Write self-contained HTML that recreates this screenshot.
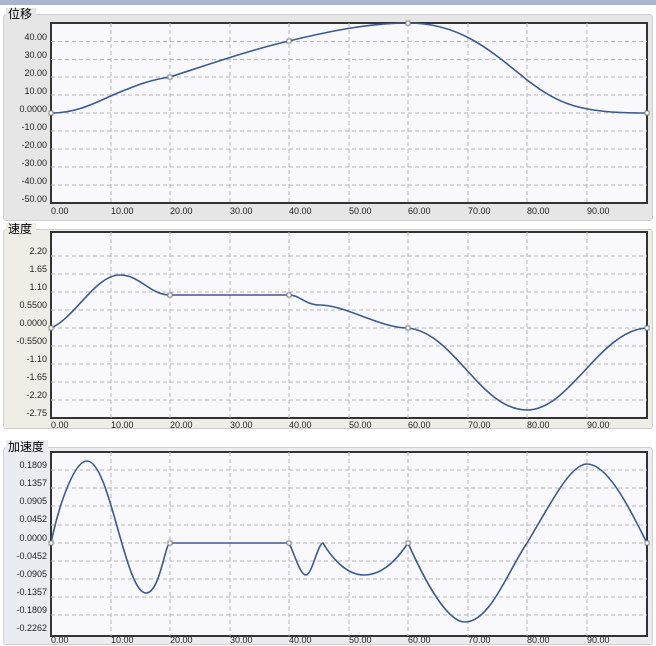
<!DOCTYPE html>
<html><head><meta charset="utf-8"><style>
body{margin:0;width:656px;height:646px;overflow:hidden;background:#fff}
svg{display:block}
text{font-family:"Liberation Sans","Noto Sans CJK SC",sans-serif;fill:#222}
.t{font-size:9px}
.h{font-size:12px;fill:#000}
.g{stroke:#b8b8b8;stroke-dasharray:4 3;stroke-width:1;fill:none}
.c{stroke:#3a5a90;stroke-width:1.6;fill:none}
.m{fill:#fff;stroke:#888;stroke-width:1}
</style></head><body>
<svg width="656" height="646" xmlns="http://www.w3.org/2000/svg">
<rect x="0" y="0" width="656" height="5" fill="#a9b4cf"/>
<!-- panel 1 -->
<rect x="3.5" y="14.5" width="649" height="206" rx="3" fill="#e6e6e6" stroke="#cfcfcf"/>
<rect x="6" y="8" width="30" height="13" fill="#e6e6e6"/>
<text class="h" x="8" y="18">位移</text>
<rect x="51" y="23" width="596" height="180" fill="#f9f9fd" stroke="#333" stroke-width="2"/>
<g class="g">
<path d="M111,23V203M170,23V203M230,23V203M289,23V203M349,23V203M408,23V203M468,23V203M527,23V203M587,23V203"/>
<path d="M51,41.5H647M51,59.5H647M51,77H647M51,95H647M51,113H647M51,131H647M51,149H647M51,167H647M51,185H647"/>
</g>
<g class="t" text-anchor="end">
<text x="47" y="40">40.00</text><text x="47" y="58">30.00</text><text x="47" y="76">20.00</text><text x="47" y="94">10.00</text><text x="47" y="112">0.0000</text><text x="47" y="130">-10.00</text><text x="47" y="148">-20.00</text><text x="47" y="166">-30.00</text><text x="47" y="184">-40.00</text><text x="47" y="202">-50.00</text>
</g>
<g class="t"><text x="51" y="214">0.00</text><text x="111" y="214">10.00</text><text x="170" y="214">20.00</text><text x="230" y="214">30.00</text><text x="289" y="214">40.00</text><text x="349" y="214">50.00</text><text x="408" y="214">60.00</text><text x="468" y="214">70.00</text><text x="527" y="214">80.00</text><text x="587" y="214">90.00</text></g>
<path class="c" d="M51,113 C80,113 100,100 120,92 C140,84 150,80 170,77 C210,64 250,50 289,41 C330,31 370,23 408,23 C460,23 490,50 527,80 C560,105 580,113 647,113"/>
<g class="m"><rect x="49" y="111" width="4" height="4"/><rect x="168" y="75" width="4" height="4"/><rect x="287" y="39" width="4" height="4"/><rect x="406" y="21" width="4" height="4"/><rect x="645" y="111" width="4" height="4"/></g>

<!-- panel 2 -->
<rect x="3.5" y="229.5" width="649" height="199" rx="3" fill="#efeee6" stroke="#cfcfcf"/>
<rect x="6" y="223" width="30" height="13" fill="#efeee6"/>
<text class="h" x="8" y="233">速度</text>
<rect x="51" y="232" width="596" height="186" fill="#f9f9fd" stroke="#333" stroke-width="2"/>
<g class="g">
<path d="M111,232V418M170,232V418M230,232V418M289,232V418M349,232V418M408,232V418M468,232V418M527,232V418M587,232V418"/>
<path d="M51,256H647M51,274H647M51,292H647M51,310H647M51,328H647M51,346H647M51,364H647M51,382H647M51,400H647"/>
</g>
<g class="t" text-anchor="end">
<text x="47" y="254">2.20</text><text x="47" y="272">1.65</text><text x="47" y="290">1.10</text><text x="47" y="308">0.5500</text><text x="47" y="326">0.0000</text><text x="47" y="344">-0.5500</text><text x="47" y="362">-1.10</text><text x="47" y="380">-1.65</text><text x="47" y="398">-2.20</text><text x="47" y="416">-2.75</text>
</g>
<g class="t"><text x="51" y="428">0.00</text><text x="111" y="428">10.00</text><text x="170" y="428">20.00</text><text x="230" y="428">30.00</text><text x="289" y="428">40.00</text><text x="349" y="428">50.00</text><text x="408" y="428">60.00</text><text x="468" y="428">70.00</text><text x="527" y="428">80.00</text><text x="587" y="428">90.00</text></g>
<path class="c" d="M51,328 C75,318 95,275 120,275 C140,275 150,295 170,295 L289,295 C300,295 305,305 320,305 C345,305 380,328 408,328 C455,333 480,410 527,410 C570,410 600,330 647,328"/>
<g class="m"><rect x="49" y="326" width="4" height="4"/><rect x="168" y="293" width="4" height="4"/><rect x="287" y="293" width="4" height="4"/><rect x="406" y="326" width="4" height="4"/><rect x="645" y="326" width="4" height="4"/></g>

<!-- panel 3 -->
<rect x="3.5" y="447.5" width="649" height="197" rx="3" fill="#ebebf2" stroke="#cfcfcf"/>
<rect x="6" y="440" width="42" height="13" fill="#ebebf2"/>
<text class="h" x="8" y="451">加速度</text>
<rect x="51" y="452" width="596" height="184" fill="#f9f9fd" stroke="#333" stroke-width="2"/>
<g class="g">
<path d="M111,452V636M170,452V636M230,452V636M289,452V636M349,452V636M408,452V636M468,452V636M527,452V636M587,452V636"/>
<path d="M51,470H647M51,488H647M51,506H647M51,525H647M51,543H647M51,561H647M51,579H647M51,597H647M51,615H647"/>
</g>
<g class="t" text-anchor="end">
<text x="47" y="468">0.1809</text><text x="47" y="486">0.1357</text><text x="47" y="504">0.0905</text><text x="47" y="522">0.0452</text><text x="47" y="541">0.0000</text><text x="47" y="559">-0.0452</text><text x="47" y="577">-0.0905</text><text x="47" y="595">-0.1357</text><text x="47" y="613">-0.1809</text><text x="47" y="631">-0.2262</text>
</g>
<g class="t"><text x="51" y="643">0.00</text><text x="111" y="643">10.00</text><text x="170" y="643">20.00</text><text x="230" y="643">30.00</text><text x="289" y="643">40.00</text><text x="349" y="643">50.00</text><text x="408" y="643">60.00</text><text x="468" y="643">70.00</text><text x="527" y="643">80.00</text><text x="587" y="643">90.00</text></g>
<path class="c" d="M51,543 C60,500 75,461 87,461 C110,461 125,593 146,593 C160,593 165,543 170,543 L289,543 C295,555 300,575 306,575 C312,575 318,543 323,543 C330,555 345,575 364,575 C385,575 400,555 408,543 C420,570 445,622 465,622 C490,622 508,571 527,543 C550,505 570,464 587,464 C610,464 635,520 647,543"/>
<g class="m"><rect x="49" y="541" width="4" height="4"/><rect x="168" y="541" width="4" height="4"/><rect x="287" y="541" width="4" height="4"/><rect x="406" y="541" width="4" height="4"/><rect x="645" y="541" width="4" height="4"/></g>
</svg>
</body></html>
